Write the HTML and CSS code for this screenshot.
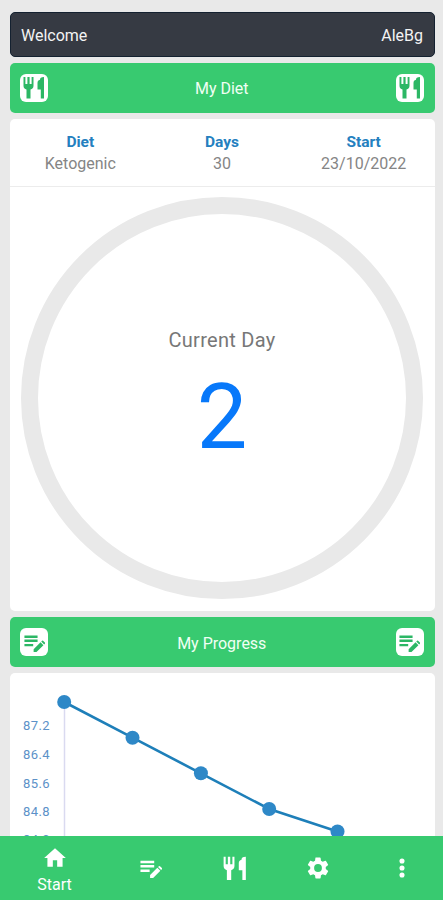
FILE: index.html
```html
<!DOCTYPE html>
<html lang="en">
<head>
<meta charset="utf-8">
<meta name="viewport" content="width=device-width">
<title>My Diet</title>
<link rel="stylesheet" href="styles.css">
</head>
<body>
<svg class="symbols" aria-hidden="true">
  <symbol id="cutlery" viewBox="0 0 24 24"><path d="M1.500 1.500h1.900v7h2v-7h2.200v7h2v-7h1.900v8.700c0 2.200-1.200 3.300-3 3.800v9H4.500V14c-1.800-.5-3-1.600-3-3.800zM15.500 7.500c0-1.800.8-2.800 2.500-3.200 0-1.800 1-2.800 4-2.800v21.500h-3.200V14h-3.300z"/></symbol>
  <symbol id="note" viewBox="0 0 24 24"><path d="M.5 4h15v2.800H.5zM.5 8.700h15v2.800H.5zM.5 13.600h10v2.800H.5zM11 19.600l7.900-7.900 3.300 3.300-7.900 7.900H11zM19.700 10.900l.9-.9q.6-.6 1.200 0l2.100 2.100q.6.6 0 1.200l-.9.9z"/></symbol>
</svg>
<div class="app">
  <main class="content">
    <header class="welcome"><span>Welcome</span><span>AleBg</span></header>
    <section class="title">
      <span class="badge"><svg><use href="#cutlery"/></svg></span>
      <h2>My Diet</h2>
      <span class="badge"><svg><use href="#cutlery"/></svg></span>
    </section>
    <section class="card diet">
      <dl class="facts">
        <div><dt>Diet</dt><dd>Ketogenic</dd></div>
        <div><dt>Days</dt><dd>30</dd></div>
        <div><dt>Start</dt><dd>23/10/2022</dd></div>
      </dl>
      <div class="ring">
        <span class="ring-label">Current Day</span>
        <span class="ring-value">2</span>
      </div>
    </section>
    <section class="title">
      <span class="badge"><svg class="note"><use href="#note"/></svg></span>
      <h2>My Progress</h2>
      <span class="badge"><svg class="note"><use href="#note"/></svg></span>
    </section>
    <section class="card progress">
      <svg class="chart" viewBox="0 0 425 230">
        <path class="axis" d="M54.500 29V230"/>
        <g class="ticks">
          <text x="40" y="57">87.2</text>
          <text x="40" y="86">86.4</text>
          <text x="40" y="114.500">85.6</text>
          <text x="40" y="143">84.8</text>
          <text x="40" y="171">84.0</text>
        </g>
        <polyline class="line" points="54.200,29 122.500,64.700 190.900,100.300 259.200,136 327.500,158.500"/>
        <g class="dots">
          <circle cx="54.200" cy="29" r="7"/><circle cx="122.500" cy="64.700" r="7"/><circle cx="190.900" cy="100.300" r="7"/><circle cx="259.200" cy="136" r="7"/><circle cx="327.500" cy="158.500" r="7"/>
        </g>
      </svg>
    </section>
  </main>
  <nav class="tabs">
    <a class="active"><svg viewBox="0 0 24 24"><path d="M10 20v-6h4v6h5v-8h3L12 3 2 12h3v8z"/></svg><span>Start</span></a>
    <a><svg class="note" viewBox="0 0 24 24"><use href="#note"/></svg></a>
    <a><svg viewBox="0 0 24 24"><use href="#cutlery"/></svg></a>
    <a><svg viewBox="0 0 24 24"><path d="M19.140 12.940c.04-.3.06-.61.06-.94 0-.32-.02-.64-.07-.94l2.030-1.580a.49.49 0 0 0 .12-.61l-1.920-3.320a.488.488 0 0 0-.59-.22l-2.390.96c-.5-.38-1.030-.7-1.620-.94l-.36-2.540a.484.484 0 0 0-.48-.41h-3.840c-.24 0-.43.17-.47.41l-.36 2.540c-.59.24-1.130.57-1.620.94l-2.390-.96c-.22-.08-.47 0-.59.22L2.740 8.870c-.12.21-.08.47.12.61l2.030 1.580c-.05.3-.09.63-.09.94s.02.64.07.94l-2.030 1.580a.49.49 0 0 0-.12.61l1.920 3.320c.12.22.37.29.59.22l2.390-.96c.5.38 1.030.7 1.620.94l.36 2.540c.05.24.24.41.48.41h3.840c.24 0 .44-.17.47-.41l.36-2.540c.59-.24 1.130-.56 1.620-.94l2.390.96c.22.08.47 0 .59-.22l1.920-3.320c.12-.22.07-.47-.12-.61zM12 15.600A3.600 3.600 0 1 1 12 8.400a3.600 3.600 0 0 1 0 7.200z"/></svg></a>
    <a><svg viewBox="0 0 24 24"><circle cx="12" cy="5.600" r="2.350"/><circle cx="12" cy="12" r="2.350"/><circle cx="12" cy="18.400" r="2.350"/></svg></a>
  </nav>
</div>
</body>
</html>
```
FILE: styles.css
```css
* { box-sizing: border-box; margin: 0; }
body { background: #e9e9e9; font-family: Roboto, sans-serif; font-size: 16px; overflow: hidden; }
.symbols { display: none; }
.app { height: 900px; display: flex; flex-direction: column; }
.content { flex: 1; min-height: 0; overflow: hidden; padding: 12px 8.500px 0 9.500px; display: flex; flex-direction: column; gap: 6px; }
.content > * { flex-shrink: 0; }
.welcome { height: 45px; margin-bottom: -.5px; padding: 1px 10.500px 0; display: flex; align-items: center; justify-content: space-between; background: #363a43; border: 1px solid #142130; border-radius: 5px; color: #f3f3f3; }
.title { height: 50px; padding: 0 11px 0 10.500px; display: flex; align-items: center; justify-content: space-between; background: #38ca70; border-radius: 5px; color: #f0fff4; }
.title h2 { font-size: 16px; font-weight: 400; padding-top: 2px; }
.badge { width: 28px; height: 28px; display: grid; place-items: center; background: #fff; border-radius: 6px; }
.badge svg { width: 24px; height: 25px; fill: #2cb765; }
.badge .note { width: 21px; height: 21px; }
.card { background: #fff; border-radius: 5px; }
.diet { height: 492.500px; }
.facts { height: 68px; padding-top: 13px; display: grid; grid-template-columns: repeat(3, 1fr); text-align: center; line-height: 21.500px; border-bottom: 1px solid #ececec; }
.facts dt { color: #2480bf; font-weight: 700; font-size: 15.500px; }
.facts dd { color: #858585; }
.ring { width: 402px; height: 402px; margin: 10.500px auto 0; border: 17px solid #e9e9e9; border-radius: 50%; display: flex; flex-direction: column; align-items: center; }
.ring-label { margin-top: 114px; font-size: 20px; line-height: 24px; color: #777; letter-spacing: .3px; }
.ring-value { margin-top: 12px; font-size: 90px; line-height: 108px; color: #0778fa; }
.progress { height: 230px; }
.chart { display: block; width: 425px; height: 230px; }
.axis { stroke: #dadaf0; stroke-width: 1.500; }
.ticks { fill: #5c91c8; font-size: 13px; text-anchor: end; letter-spacing: .4px; }
.line { fill: none; stroke: #1e7fb9; stroke-width: 2.600; }
.dots { fill: #2e88c7; }
.tabs { height: 64.500px; flex-shrink: 0; padding: 0 5px 0 7px; display: grid; grid-template-columns: 95px 97px 71px 95px 1fr; background: #38ca70; color: #fff; }
.tabs a { display: flex; flex-direction: column; align-items: center; justify-content: center; }
.tabs svg { width: 26px; height: 26px; fill: #fff; }
.tabs .note { width: 22px; height: 22px; }
.tabs span { line-height: 20px; margin-top: 4px; }
.tabs .active { padding-top: 4px; }
```
